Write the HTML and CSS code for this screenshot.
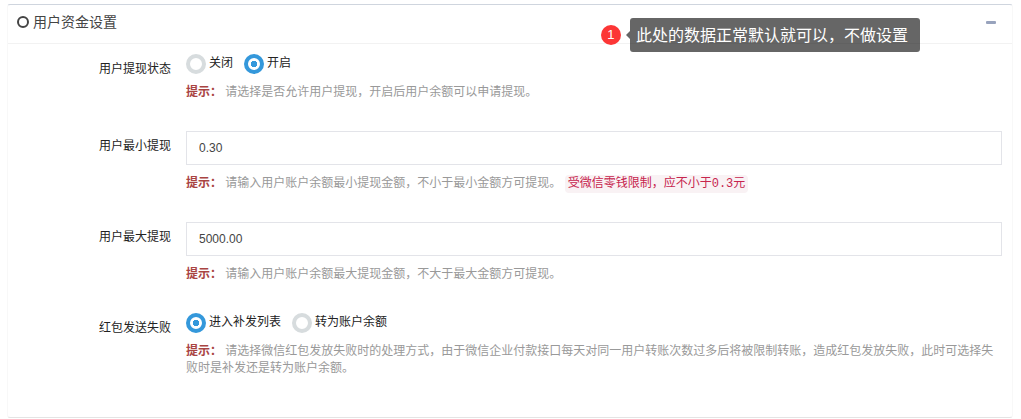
FILE: index.html
```
<!DOCTYPE html>
<html lang="zh-CN">
<head>
    <meta charset="UTF-8">
    <meta name="viewport" content="width=device-width, initial-scale=1.0">
    <title>用户资金设置</title>
    <link rel="stylesheet" href="styles.css">
</head>
<body>
    <form class="panel">
        <div class="panel-heading">
            <svg class="icon-circle" viewBox="0 0 12 12"><circle cx="6" cy="6" r="5"/></svg>
            <h1 class="panel-title">用户资金设置</h1>
            <button type="button" class="collapse" aria-label="收起">
                <svg class="icon-minus" viewBox="0 0 10 3"><rect width="10" height="3" rx="1"/></svg>
            </button>
        </div>
        <div class="panel-body">
            <div class="form-group" role="radiogroup" aria-labelledby="statusLabel">
                <span class="control-label" id="statusLabel">用户提现状态</span>
                <div class="field">
                    <div class="radios">
                        <label class="radio"><input type="radio" name="status" value="0">关闭</label>
                        <label class="radio"><input type="radio" name="status" value="1" checked>开启</label>
                    </div>
                    <p class="help"><strong>提示：</strong> 请选择是否允许用户提现，开启后用户余额可以申请提现。</p>
                </div>
            </div>
            <div class="form-group">
                <label class="control-label" for="minMoney">用户最小提现</label>
                <div class="field">
                    <input type="text" class="form-control" id="minMoney" value="0.30">
                    <p class="help"><strong>提示：</strong> 请输入用户账户余额最小提现金额，不小于最小金额方可提现。 <code>受微信零钱限制，应不小于0.3元</code></p>
                </div>
            </div>
            <div class="form-group">
                <label class="control-label" for="maxMoney">用户最大提现</label>
                <div class="field">
                    <input type="text" class="form-control" id="maxMoney" value="5000.00">
                    <p class="help"><strong>提示：</strong> 请输入用户账户余额最大提现金额，不大于最大金额方可提现。</p>
                </div>
            </div>
            <div class="form-group" role="radiogroup" aria-labelledby="failLabel">
                <span class="control-label" id="failLabel">红包发送失败</span>
                <div class="field">
                    <div class="radios">
                        <label class="radio"><input type="radio" name="fail" value="0" checked>进入补发列表</label>
                        <label class="radio"><input type="radio" name="fail" value="1">转为账户余额</label>
                    </div>
                    <p class="help"><strong>提示：</strong> 请选择微信红包发放失败时的处理方式，由于微信企业付款接口每天对同一用户转账次数过多后将被限制转账，造成红包发放失败，此时可选择失败时是补发还是转为账户余额。</p>
                </div>
            </div>
        </div>
        <div class="note">
            <span class="note-num">1</span>
            <div class="note-text">此处的数据正常默认就可以，不做设置</div>
        </div>
    </form>
</body>
</html>
```
FILE: styles.css
```
* {
    box-sizing: border-box;
}
body {
    margin: 4px 8px 0 7px;
    font-family: "Liberation Sans", "Noto Sans CJK SC", sans-serif;
    font-size: 12px;
    line-height: 17px;
    color: #222;
    background-color: #fff;
}
.panel {
    position: relative;
    border: 1px solid #f8f8f8;
    border-top-color: #cfd5de;
    border-bottom-color: #e4e4e4;
    border-radius: 3px;
}
.panel-heading {
    display: flex;
    align-items: center;
    height: 39px;
    padding: 0 16px 4px 9px;
    border-bottom: 1px solid #f2f2f2;
}
.icon-circle {
    width: 12px;
    height: 12px;
    margin-right: 4px;
    fill: none;
    stroke: #444;
    stroke-width: 2;
}
.panel-title {
    margin: 0;
    font-size: 14px;
    font-weight: normal;
    line-height: 20px;
    color: #444;
}
.collapse {
    display: flex;
    margin-left: auto;
    padding: 0;
    border: none;
    background: none;
    cursor: pointer;
}
.icon-minus {
    width: 10px;
    height: 3px;
    fill: #98a3bd;
}
.panel-body {
    padding: 10px 10px 10px 9px;
}
.form-group {
    display: grid;
    grid-template-columns: 154px 1fr;
    column-gap: 15px;
    margin-bottom: 30px;
}
.control-label {
    padding-top: 7px;
    text-align: right;
}
.radios {
    display: flex;
    gap: 11px;
}
.radio {
    display: flex;
    gap: 3px;
    line-height: 19px;
    cursor: pointer;
}
.radio input {
    appearance: none;
    width: 20px;
    height: 20px;
    margin: 0;
    border: 4px solid #d7dcde;
    border-radius: 50%;
    background-color: #fff;
}
.radio input:checked {
    border-color: #3498db;
    background: radial-gradient(circle, #3498db 0 3px, #fff 3px) padding-box;
}
.form-control {
    display: block;
    width: 100%;
    height: 34px;
    padding: 0 12px;
    border: 1px solid #e3e4e9;
    font-family: inherit;
    font-size: 12px;
    color: #444;
    background-color: #fff;
}
.help {
    margin: 10px 0 0;
    color: #999;
}
.help strong {
    color: #a94442;
}
.help code {
    padding: 2px 3px;
    border-radius: 4px;
    font-family: "Liberation Mono", "Noto Sans CJK SC", monospace;
    font-size: 12px;
    line-height: 1;
    color: #c7254e;
    background-color: #f9f2f4;
}
/* numbered note over the heading */
.note {
    position: absolute;
    top: 13px;
    right: 92px;
    display: flex;
    align-items: center;
    gap: 9px;
}
.note-num {
    width: 20px;
    height: 20px;
    border-radius: 50%;
    font-size: 13px;
    line-height: 20px;
    text-align: center;
    color: #fff;
    background-color: #fc3636;
}
.note-text {
    position: relative;
    padding: 6px 12px 4px 6px;
    border-radius: 3px;
    font-size: 16px;
    line-height: 24px;
    color: #fff;
    background-color: rgba(0, 0, 0, 0.6);
}
.note-text::before {
    content: "";
    position: absolute;
    top: 13px;
    left: -4px;
    border: 4px solid transparent;
    border-left: none;
    border-right-color: rgba(0, 0, 0, 0.6);
}
```
